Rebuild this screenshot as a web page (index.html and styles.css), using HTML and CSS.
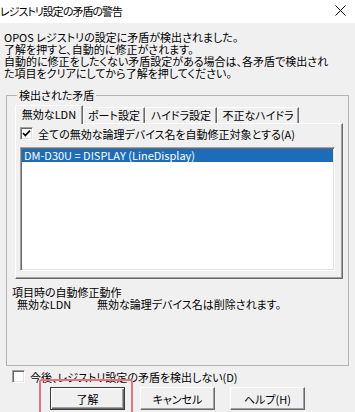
FILE: index.html
```html
<!DOCTYPE html>
<html lang="ja">
<head>
  <meta charset="UTF-8">
  <meta name="viewport" content="width=device-width, initial-scale=1.0">
  <title>レジストリ設定の矛盾の警告</title>
  <link rel="stylesheet" href="styles.css">
</head>
<body>
  <div class="window">
    <!-- Title bar -->
    <div class="titlebar">
      <span class="title">レジストリ設定の矛盾の警告</span>
      <svg class="close" width="11" height="11" viewBox="0 0 11 11">
        <path d="M0.5 0.5 L10.5 10.5 M10.5 0.5 L0.5 10.5" stroke="#000" stroke-width="1" fill="none"/>
      </svg>
    </div>

    <!-- Message -->
    <div class="message">
      OPOS レジストリの設定に矛盾が検出されました。<br>
      了解を押すと、自動的に修正がされます。<br>
      自動的に修正をしたくない矛盾設定がある場合は、各矛盾で検出され<br>
      た項目をクリアにしてから了解を押してください。
    </div>

    <!-- Detected conflicts -->
    <fieldset class="group">
      <legend>検出された矛盾</legend>

      <div class="tabs">
        <div class="tab active">無効なLDN</div>
        <div class="tab tab-port">ポート設定</div>
        <div class="tab tab-driver">ハイドラ設定</div>
        <div class="tab tab-bad">不正なハイドラ</div>
      </div>

      <div class="tab-panel">
        <label class="check">
          <span class="box">
            <svg width="11" height="11" viewBox="0 0 11 11">
              <path d="M2 5 L4.3 7.6 L9 2.6" stroke="#000" stroke-width="1.7" fill="none"/>
            </svg>
          </span>
          全ての無効な論理デバイス名を自動修正対象とする(A)
        </label>
        <div class="listbox">
          <div class="list-item selected">DM-D30U = DISPLAY (LineDisplay)</div>
        </div>
      </div>

      <div class="action-title">項目時の自動修正動作</div>
      <div class="action-row">
        <span class="action-name">無効なLDN</span>
        <span>無効な論理デバイス名は削除されます。</span>
      </div>
    </fieldset>

    <label class="check bottom-check">
      <span class="box"></span>
      今後、レジストリ設定の矛盾を検出しない(D)
    </label>

    <div class="buttons">
      <button class="btn default">了解</button>
      <button class="btn">キャンセル</button>
      <button class="btn">ヘルプ(H)</button>
    </div>

    <!-- Highlight around OK -->
    <div class="highlight"></div>
  </div>
</body>
</html>
```

FILE: styles.css
```css
body {
  margin: 0;
  padding: 0;
  background: #f0f0f0;
  font-family: "Noto Sans CJK JP", "Noto Sans", sans-serif;
  font-size: 11px;
  line-height: 12px;
  color: #000;
  font-feature-settings: "palt";
}
.window {
  position: relative;
  width: 355px;
  height: 412px;
  overflow: hidden;
  background: #f0f0f0;
}
.titlebar {
  height: 23px;
  background: #fff;
  display: flex;
  justify-content: space-between;
  align-items: center;
}
.title {
  letter-spacing: -1px;
  margin-top: -1px;
}
.close {
  margin-right: 9px;
  margin-top: -2px;
}
.message {
  padding: 8px 0 0 4px;
  white-space: nowrap;
}
.group {
  margin: 10px 6px 0 6px;
  padding: 4px 5px 55px 5px;
  border: 1px solid #b4b4b4;
  min-inline-size: 0;
}
.group legend {
  margin-left: 5px;
  padding: 0 2px;
  line-height: 12px;
}
.tabs {
  display: flex;
  align-items: flex-end;
  height: 18px;
  margin-left: 3px;
}
.tab {
  height: 15px;
  border-top: 1px solid #fff;
  border-left: 1px solid #fff;
  border-right: 1px solid #696969;
  box-shadow: inset -1px 0 #a0a0a0;
  text-align: center;
  line-height: 15px;
  white-space: nowrap;
}
.tab.active {
  position: relative;
  z-index: 1;
  width: 66px;
  height: 18px;
  margin-bottom: -1px;
  line-height: 16px;
  background: #f0f0f0;
}
.tab-port {
  width: 60px;
}
.tab-driver {
  width: 70px;
}
.tab-bad {
  width: 80px;
}
.tab-panel {
  margin-left: 3px;
  width: 316px;
  height: 151px;
  padding: 3px 6px 0 4px;
  border-top: 1px solid #fff;
  border-left: 1px solid #fff;
  border-right: 1px solid #696969;
  border-bottom: 1px solid #696969;
  box-shadow: inset -1px -1px #a0a0a0;
}
.check {
  display: flex;
  align-items: center;
  gap: 5px;
  height: 13px;
  white-space: nowrap;
}
.box {
  width: 11px;
  height: 11px;
  background: #fff;
  border-top: 1px solid #a0a0a0;
  border-left: 1px solid #a0a0a0;
  border-right: 1px solid #fff;
  border-bottom: 1px solid #fff;
  box-shadow: inset 1px 1px #696969, inset -1px -1px #e3e3e3;
  display: flex;
  flex-shrink: 0;
}
.listbox {
  margin-top: 7px;
  width: 311px;
  height: 120px;
  background: #fff;
  padding: 1px;
  border-top: 1px solid #a0a0a0;
  border-left: 1px solid #a0a0a0;
  border-right: 1px solid #fff;
  border-bottom: 1px solid #fff;
  box-shadow: inset 1px 1px #696969, inset -1px -1px #e3e3e3;
}
.list-item {
  height: 13px;
  line-height: 13px;
  padding-left: 2px;
  white-space: nowrap;
}
.list-item.selected {
  background: #1d6cba;
  color: #fff;
}
.action-title {
  margin-top: 7px;
}
.action-row {
  display: flex;
  padding-left: 5px;
  white-space: nowrap;
}
.action-name {
  width: 80px;
}
.bottom-check {
  margin: 4px 0 0 12px;
}
.buttons {
  display: flex;
  gap: 15px;
  margin: 4px 0 0 50px;
}
.btn {
  width: 75px;
  height: 23px;
  padding: 0;
  font-family: inherit;
  font-size: 11px;
  line-height: 12px;
  font-feature-settings: "palt";
  color: #000;
  background: #f0f0f0;
  border-top: 1px solid #fff;
  border-left: 1px solid #fff;
  border-right: 1px solid #696969;
  border-bottom: 1px solid #696969;
  box-shadow: inset -1px -1px #a0a0a0;
}
.btn.default {
  border: 1px solid #3c3c3c;
  box-shadow: inset 1px 1px #fff, inset -1px -1px #696969, inset -2px -2px #a0a0a0;
}
.highlight {
  position: absolute;
  left: 39px;
  top: 379px;
  width: 90px;
  height: 40px;
  border: 2px solid #e8737e;
  border-radius: 3px;
}
```
